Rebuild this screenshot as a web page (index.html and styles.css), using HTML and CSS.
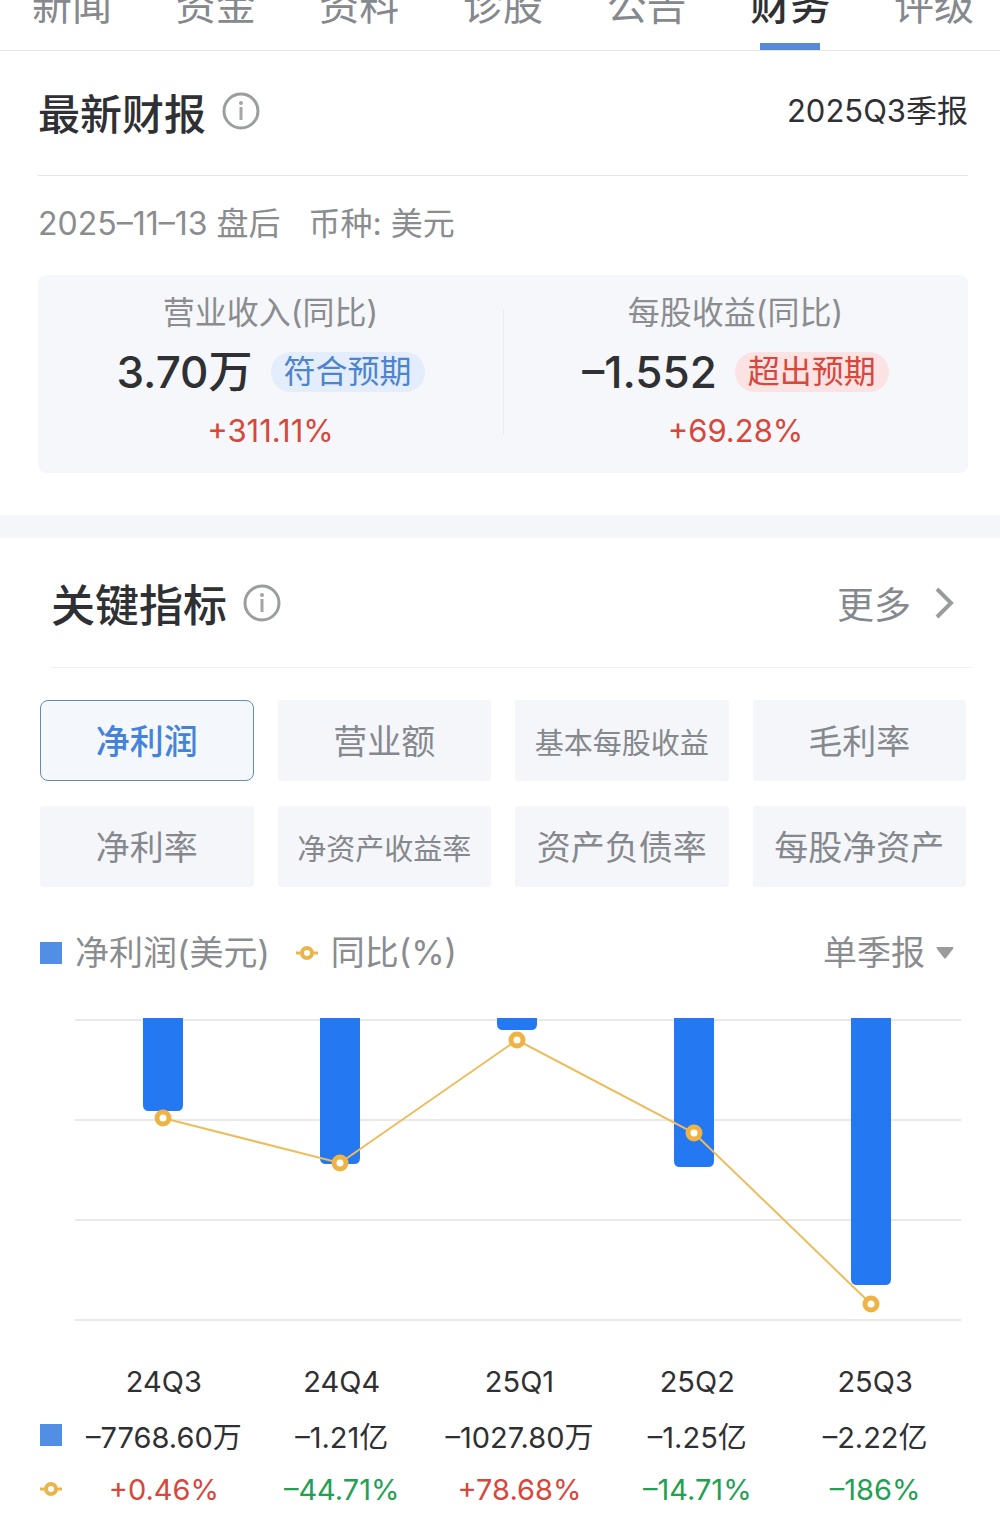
FILE: index.html
```html
<!DOCTYPE html>
<html lang="zh-Hans">
<head>
    <meta charset="UTF-8">
    <meta name="viewport" content="width=device-width, initial-scale=1.0">
    <title>财务</title>
    <link rel="stylesheet" href="styles.css">
</head>
<body>
    <nav class="tabs">
        <a href="#news">新闻</a>
        <a href="#funds">资金</a>
        <a href="#profile">资料</a>
        <a href="#diagnosis">诊股</a>
        <a href="#notice">公告</a>
        <a href="#finance" class="active">财务</a>
        <a href="#rating">评级</a>
    </nav>

    <section class="report">
        <header class="report-header">
            <h2>最新财报</h2>
            <button type="button" class="info-btn" aria-label="最新财报说明">
                <svg viewBox="0 0 38 38" width="38" height="38">
                    <circle cx="19" cy="19" r="17" fill="none" stroke="#9b9d9f" stroke-width="3"/>
                    <circle cx="19" cy="11" r="2" fill="#a3a5a7"/>
                    <path d="M19 15v13" stroke="#a3a5a7" stroke-width="3"/>
                </svg>
            </button>
            <span class="period">2025Q3季报</span>
        </header>

        <p class="report-date"><span>2025–11–13 盘后</span><span>币种: 美元</span></p>

        <div class="summary">
            <div class="summary-item">
                <div class="label">营业收入(同比)</div>
                <div class="value">3.70万 <span class="badge badge-blue">符合预期</span></div>
                <div class="rate up">+311.11%</div>
            </div>
            <div class="summary-item">
                <div class="label">每股收益(同比)</div>
                <div class="value">–1.552 <span class="badge badge-red">超出预期</span></div>
                <div class="rate up">+69.28%</div>
            </div>
        </div>
    </section>

    <section class="metrics">
        <header class="metrics-header">
            <h2>关键指标</h2>
            <button type="button" class="info-btn" aria-label="关键指标说明">
                <svg viewBox="0 0 38 38" width="38" height="38">
                    <circle cx="19" cy="19" r="17" fill="none" stroke="#9b9d9f" stroke-width="3"/>
                    <circle cx="19" cy="11" r="2" fill="#a3a5a7"/>
                    <path d="M19 15v13" stroke="#a3a5a7" stroke-width="3"/>
                </svg>
            </button>
            <a href="#more" class="more">更多
                <svg viewBox="0 0 20 32" width="20" height="32">
                    <path d="M3 2l14 14L3 30" fill="none" stroke="#999b9e" stroke-width="4"/>
                </svg>
            </a>
        </header>

        <div class="metric-grid">
            <button type="button" class="active">净利润</button>
            <button type="button">营业额</button>
            <button type="button" class="long">基本每股收益</button>
            <button type="button">毛利率</button>
            <button type="button">净利率</button>
            <button type="button" class="long">净资产收益率</button>
            <button type="button">资产负债率</button>
            <button type="button">每股净资产</button>
        </div>

        <div class="legend">
            <span class="square"></span>
            <span class="legend-text">净利润(美元)</span>
            <svg class="marker" viewBox="0 0 22 14" width="22" height="14">
                <path d="M0 7h22" stroke="#eab64c" stroke-width="3"/>
                <circle cx="11" cy="7" r="5" fill="#fff" stroke="#eab64c" stroke-width="4"/>
            </svg>
            <span class="legend-text">同比(%)</span>
            <label class="period-select">
                <select aria-label="报告周期">
                    <option>单季报</option>
                </select>
                <svg viewBox="0 0 18 12" width="18" height="12">
                    <path d="M1 0h16q1 0 0 2l-7 9q-1 1-2 0L1 2q-1-2 0-2z" fill="#999b9d"/>
                </svg>
            </label>
        </div>

        <svg class="chart" viewBox="0 0 886 304">
            <!-- 网格线 -->
            <path d="M0 2h886M0 102h886M0 202h886M0 302h886" stroke="#e9e9ea" stroke-width="2"/>
            <!-- 柱状图 -->
            <g fill="#2478f2">
                <path d="M68 0h40v87q0 6-6 6H74q-6 0-6-6z"/>
                <path d="M245 0h40v140q0 6-6 6h-28q-6 0-6-6z"/>
                <path d="M422 0h40v6q0 6-6 6h-28q-6 0-6-6z"/>
                <path d="M599 0h40v143q0 6-6 6h-28q-6 0-6-6z"/>
                <path d="M776 0h40v261q0 6-6 6h-28q-6 0-6-6z"/>
            </g>
            <!-- 同比折线 -->
            <polyline points="88,100 265,145 442,22 619,115 796,286" fill="none" stroke="#edbd5c" stroke-width="2"/>
            <g fill="#fff" stroke="#efb345" stroke-width="5">
                <circle cx="88" cy="100" r="6"/>
                <circle cx="265" cy="145" r="6"/>
                <circle cx="442" cy="22" r="6"/>
                <circle cx="619" cy="115" r="6"/>
                <circle cx="796" cy="286" r="6"/>
            </g>
        </svg>

        <table class="data-table">
            <thead>
                <tr>
                    <td class="key"></td>
                    <th>24Q3</th>
                    <th>24Q4</th>
                    <th>25Q1</th>
                    <th>25Q2</th>
                    <th>25Q3</th>
                </tr>
            </thead>
            <tbody>
                <tr>
                    <th class="key" aria-label="净利润"><span class="square"></span></th>
                    <td>–7768.60万</td>
                    <td>–1.21亿</td>
                    <td>–1027.80万</td>
                    <td>–1.25亿</td>
                    <td>–2.22亿</td>
                </tr>
                <tr>
                    <th class="key" aria-label="同比">
                        <svg viewBox="0 0 22 14" width="22" height="14">
                            <path d="M0 7h22" stroke="#eab64c" stroke-width="3"/>
                            <circle cx="11" cy="7" r="5" fill="#fff" stroke="#eab64c" stroke-width="4"/>
                        </svg>
                    </th>
                    <td class="up">+0.46%</td>
                    <td class="down">–44.71%</td>
                    <td class="up">+78.68%</td>
                    <td class="down">–14.71%</td>
                    <td class="down">–186%</td>
                </tr>
            </tbody>
        </table>
    </section>
</body>
</html>
```
FILE: styles.css
```css
* {
    box-sizing: border-box;
}

body {
    font-family: Inter, "Noto Sans CJK SC", sans-serif;
    background-color: #fff;
    color: #2f3033;
    margin: 0;
    padding: 0;
}

button,
select {
    font-family: inherit;
    border: none;
    padding: 0;
    background: none;
    cursor: pointer;
}

a {
    color: inherit;
    text-decoration: none;
}

svg {
    display: block;
}

h2 {
    margin: 0;
    font-weight: 500;
}

.up {
    color: #d6473c;
}

.down {
    color: #23a052;
}

/* 顶部标签 */
.tabs {
    display: flex;
    justify-content: space-between;
    align-items: flex-end;
    height: 51px;
    padding: 0 26px 0 32px;
    border-bottom: 1px solid #e4e5e7;
    overflow: hidden;
}

.tabs a {
    position: relative;
    padding-bottom: 24px;
    font-size: 40px;
    line-height: 40px;
    color: #85888d;
}

.tabs .active {
    color: #2f3033;
    font-weight: 500;
}

.tabs .active::after {
    content: "";
    position: absolute;
    left: 10px;
    right: 10px;
    bottom: 0;
    height: 7px;
    background-color: #5789d6;
}

/* 最新财报 */
.report {
    padding: 0 32px 42px 38px;
    border-bottom: 23px solid #f5f6fa;
}

.report-header {
    display: flex;
    align-items: center;
    height: 125px;
    padding-bottom: 4px;
    border-bottom: 1px solid #e4e5e7;
}

.report-header h2 {
    font-size: 42px;
}

.info-btn {
    margin-left: 16px;
}

.period {
    margin-left: auto;
    font-size: 31px;
    line-height: 40px;
}

.report-date {
    display: flex;
    gap: 28px;
    margin: 0;
    padding: 28px 0 31px;
    font-size: 32px;
    line-height: 40px;
    color: #8a8c8f;
}

.summary {
    display: flex;
    padding: 18px 0 22px;
    background-color: #f5f7fa;
    border-radius: 8px;
}

.summary-item {
    position: relative;
    flex: 1;
    display: flex;
    flex-direction: column;
    align-items: center;
    gap: 14px;
    font-size: 32px;
    line-height: 40px;
}

/* 中间分隔线 */
.summary-item + .summary-item::before {
    content: "";
    position: absolute;
    left: 0;
    top: 16px;
    bottom: 16px;
    width: 1px;
    background-color: #eaecf0;
}

.label {
    color: #8a8c8f;
}

.value {
    display: flex;
    align-items: center;
    gap: 18px;
    font-size: 44px;
    font-weight: 500;
    line-height: 50px;
}

.rate {
    font-size: 31px;
}

.badge {
    padding: 0 13px;
    border-radius: 20px;
    font-size: 32px;
    font-weight: 400;
    line-height: 40px;
}

.badge-blue {
    background-color: #e3edfb;
    color: #4d84cb;
}

.badge-red {
    background-color: #fce3e3;
    color: #d6473c;
}

/* 关键指标 */
.metrics-header {
    display: flex;
    align-items: center;
    height: 130px;
    margin: 0 28px 32px 51px;
    padding-right: 18px;
    border-bottom: 1px solid #eff0f2;
}

.metrics-header h2 {
    font-size: 44px;
}

.more {
    display: flex;
    align-items: center;
    gap: 23px;
    margin-left: auto;
    font-size: 37px;
    color: #85888d;
}

.metric-grid {
    display: grid;
    grid-template-columns: repeat(4, 1fr);
    grid-auto-rows: 81px;
    gap: 25px 24px;
    margin: 0 34px 0 40px;
}

.metric-grid button {
    padding-bottom: 3px;
    background-color: #f5f6fa;
    border-radius: 3px;
    font-size: 34px;
    color: #85888d;
}

.metric-grid .long {
    padding-bottom: 0;
    font-size: 29px;
}

.metric-grid .active {
    background-color: #f4f8fd;
    border: 1px solid #6789b5;
    border-radius: 8px;
    color: #4583db;
    font-weight: 500;
}

.legend {
    display: flex;
    align-items: center;
    margin: 41px 46px 40px 40px;
    font-size: 34px;
    line-height: 50px;
    color: #8a8c8f;
}

.square {
    display: block;
    width: 22px;
    height: 22px;
    background-color: #528de6;
}

.legend-text {
    margin-left: 13px;
}

.marker {
    margin-left: 26px;
}

.period-select {
    display: flex;
    align-items: center;
    gap: 11px;
    margin-left: auto;
}

.period-select select {
    appearance: none;
    font-size: 34px;
    line-height: 50px;
    color: #8a8c8f;
}

.chart {
    width: calc(100% - 114px);
    margin: 0 39px 32px 75px;
}

.data-table {
    width: calc(100% - 76px);
    margin: 0 36px 0 40px;
    table-layout: fixed;
    border-collapse: collapse;
    font-size: 29px;
    text-align: center;
}

.data-table th,
.data-table td {
    height: 54px;
    padding: 0;
    font-weight: 400;
    white-space: nowrap;
}

.data-table .key {
    width: 35px;
}
```
